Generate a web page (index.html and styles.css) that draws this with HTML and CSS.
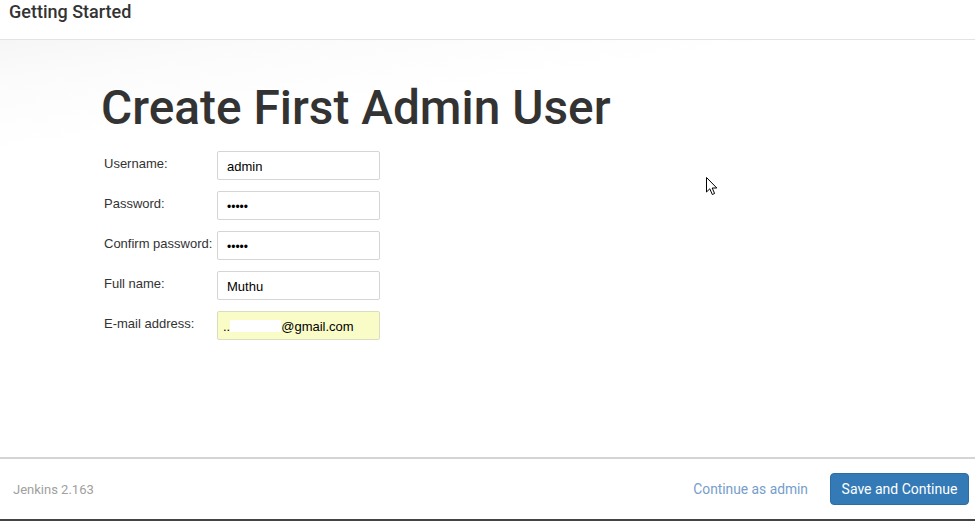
FILE: index.html
```html
<!DOCTYPE html>
<html>
<head>
<meta charset="utf-8">
<title>Getting Started</title>
<link rel="stylesheet" href="styles.css">
</head>
<body>
<div class="page">
  <header class="header">
    <h4 class="header-title">Getting Started</h4>
  </header>
  <main class="content">
    <h1 class="title">Create First Admin User</h1>
    <form class="form">
      <label class="label">Username:</label>
      <input class="field" type="text" value="admin">
      <label class="label">Password:</label>
      <input class="field dots" type="text" value="•••••">
      <label class="label">Confirm password:</label>
      <input class="field dots" type="text" value="•••••">
      <label class="label">Full name:</label>
      <input class="field" type="text" value="Muthu">
      <label class="label">E-mail address:</label>
      <div class="field autofill"><span class="dd">..</span><span class="redact"></span><span>@gmail.com</span></div>
    </form>
    <svg class="cursor" width="14" height="22" viewBox="0 0 14 22">
      <path d="M1.5 1.5 L1.5 16 L4.8 12.8 L7.3 18.5 L9.6 17.5 L7.2 12 L11.8 12 Z" fill="#fff" stroke="#000" stroke-width="1" stroke-linejoin="miter"/>
    </svg>
  </main>
  <footer class="footer">
    <span class="version">Jenkins 2.163</span>
    <div class="actions">
      <a class="link">Continue as admin</a>
      <button class="btn" type="button">Save and Continue</button>
    </div>
  </footer>
</div>
</body>
</html>
```
FILE: styles.css
```css
html, body {
  margin: 0;
  padding: 0;
  background: #fff;
}
.page {
  width: 975px;
  height: 521px;
  display: flex;
  flex-direction: column;
  font-family: Roboto, "Liberation Sans", sans-serif;
  color: #333;
  overflow: hidden;
}
.header {
  height: 39px;
  border-bottom: 1px solid #e3e3e3;
  display: flex;
  align-items: center;
  padding-left: 9px;
  flex: none;
}
.header-title {
  margin: 0;
  font-size: 18px;
  font-weight: 500;
  line-height: 20px;
  margin-top: -15px;
  color: #333;
}
.content {
  flex: 1;
  position: relative;
  padding: 42px 0 0 101px;
  background: linear-gradient(172deg, #f6f6f6 0px, #fbfbfb 40px, #fff 110px);
}
.title {
  margin: 0;
  font-size: 47.8px;
  font-weight: 500;
  line-height: 52px;
  color: #333;
}
.form {
  margin: 17px 0 0 3px;
  display: grid;
  grid-template-columns: 113px 163px;
  row-gap: 11px;
  font-family: "Liberation Sans", Arial, sans-serif;
  font-size: 13px;
}
.label {
  padding-top: 5px;
  color: #333;
  line-height: 15px;
}
.field {
  box-sizing: border-box;
  width: 163px;
  height: 29px;
  margin: 0;
  border: 1px solid #d5d5d5;
  border-radius: 2px;
  padding: 2px 9px 0 9px;
  font-family: "Liberation Sans", Arial, sans-serif;
  font-size: 13px;
  color: #000;
  background: #fff;
  outline: none;
}
.dots {
  font-size: 12px;
}
.autofill {
  display: flex;
  align-items: center;
  padding: 1px 0 0 5px;
  background: #fafcc8;
  border-color: #dcdcc0;
}
.dd {
  flex: none;
}
.redact {
  flex: none;
  display: inline-block;
  width: 51px;
  height: 12px;
  background: #fff;
}
.cursor {
  position: absolute;
  left: 705px;
  top: 136px;
}
.footer {
  flex: none;
  height: 60px;
  border-top: 2px solid #d4d4d4;
  border-bottom: 2px solid #444;
  display: flex;
  align-items: center;
  justify-content: space-between;
  padding: 0 6px 0 13px;
  background: #fff;
}
.version {
  font-size: 13px;
  color: #a0a0a0;
}
.actions {
  display: flex;
  align-items: center;
  gap: 22px;
}
.link {
  font-size: 13.8px;
  color: #769dcb;
  cursor: pointer;
}
.btn {
  height: 32px;
  width: 139px;
  padding: 0;
  font-family: Roboto, "Liberation Sans", sans-serif;
  font-size: 14px;
  color: #fff;
  background: #337ab7;
  border: 1px solid #2e6da4;
  border-radius: 4px;
}
```
